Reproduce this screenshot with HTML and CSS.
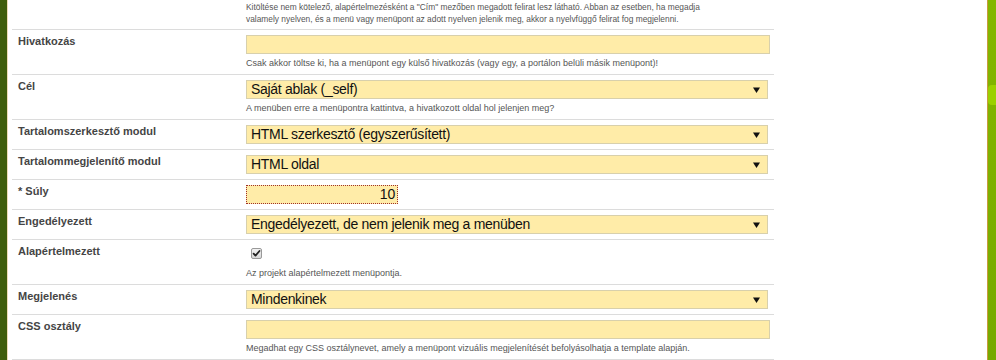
FILE: index.html
```html
<!DOCTYPE html>
<html lang="hu">
<head>
<meta charset="utf-8">
<title>Menüpont szerkesztése</title>
<link rel="stylesheet" href="styles.css">
</head>
<body>
<div class="page">
  <div class="side-left"></div>
  <main class="content">
    <div class="form">
      <div class="row row-top">
        <div class="label"></div>
        <div class="field">
          <p class="help help-top">Kitöltése nem kötelező, alapértelmezésként a "Cím" mezőben megadott felirat lesz látható. Abban az esetben, ha megadja valamely nyelven, és a menü vagy menüpont az adott nyelven jelenik meg, akkor a nyelvfüggő felirat fog megjelenni.</p>
        </div>
      </div>
      <div class="row">
        <div class="label">Hivatkozás</div>
        <div class="field">
          <div class="input"></div>
          <p class="help">Csak akkor töltse ki, ha a menüpont egy külső hivatkozás (vagy egy, a portálon belüli másik menüpont)!</p>
        </div>
      </div>
      <div class="row">
        <div class="label">Cél</div>
        <div class="field">
          <div class="select"><span class="value">Saját ablak (_self)</span><svg class="arrow" width="7" height="6" viewBox="0 0 7 6"><path d="M0 0.5H7L3.5 6Z"/></svg></div>
          <p class="help">A menüben erre a menüpontra kattintva, a hivatkozott oldal hol jelenjen meg?</p>
        </div>
      </div>
      <div class="row">
        <div class="label">Tartalomszerkesztő modul</div>
        <div class="field">
          <div class="select"><span class="value">HTML szerkesztő (egyszerűsített)</span><svg class="arrow" width="7" height="6" viewBox="0 0 7 6"><path d="M0 0.5H7L3.5 6Z"/></svg></div>
        </div>
      </div>
      <div class="row">
        <div class="label">Tartalommegjelenítő modul</div>
        <div class="field">
          <div class="select"><span class="value">HTML oldal</span><svg class="arrow" width="7" height="6" viewBox="0 0 7 6"><path d="M0 0.5H7L3.5 6Z"/></svg></div>
        </div>
      </div>
      <div class="row">
        <div class="label">* Súly</div>
        <div class="field">
          <div class="input input-weight">10</div>
        </div>
      </div>
      <div class="row">
        <div class="label">Engedélyezett</div>
        <div class="field">
          <div class="select"><span class="value">Engedélyezett, de nem jelenik meg a menüben</span><svg class="arrow" width="7" height="6" viewBox="0 0 7 6"><path d="M0 0.5H7L3.5 6Z"/></svg></div>
        </div>
      </div>
      <div class="row">
        <div class="label">Alapértelmezett</div>
        <div class="field">
          <div class="check-wrap">
            <svg class="checkbox" width="11" height="11" viewBox="0 0 11 11">
              <defs>
                <linearGradient id="cbg" x1="0" y1="0" x2="0" y2="1">
                  <stop offset="0" stop-color="#f4f4f4"/>
                  <stop offset="1" stop-color="#d6d6d6"/>
                </linearGradient>
              </defs>
              <rect x="0.5" y="0.5" width="10" height="10" rx="1.5" fill="url(#cbg)" stroke="#999"/>
              <path d="M2.6 5.6L4.5 7.6L8.5 3" fill="none" stroke="#222" stroke-width="1.8" stroke-linecap="round" stroke-linejoin="round"/>
            </svg>
          </div>
          <p class="help">Az projekt alapértelmezett menüpontja.</p>
        </div>
      </div>
      <div class="row">
        <div class="label">Megjelenés</div>
        <div class="field">
          <div class="select"><span class="value">Mindenkinek</span><svg class="arrow" width="7" height="6" viewBox="0 0 7 6"><path d="M0 0.5H7L3.5 6Z"/></svg></div>
        </div>
      </div>
      <div class="row">
        <div class="label">CSS osztály</div>
        <div class="field">
          <div class="input"></div>
          <p class="help">Megadhat egy CSS osztálynevet, amely a menüpont vizuális megjelenítését befolyásolhatja a template alapján.</p>
        </div>
      </div>
    </div>
  </main>
  <div class="side-right"><div class="bump"></div></div>
</div>
</body>
</html>
```

FILE: styles.css
```css
* {
  box-sizing: border-box;
}

html, body {
  margin: 0;
  padding: 0;
  height: 100%;
  overflow: hidden;
}

body {
  font-family: "Liberation Sans", Arial, sans-serif;
  background: #ffffff;
  color: #222;
}

.page {
  display: flex;
  height: 360px;
}

.side-left {
  width: 8px;
  flex: none;
  background: #3f5e0c;
  border-right: 1px solid #efdcb6;
}

.content {
  flex: 1;
  background: #ffffff;
  padding-left: 4px;
}

.side-right {
  width: 9px;
  flex: none;
  border-left: 1px solid #c99a3e;
  background: linear-gradient(to bottom, #84b700 0%, #7fb200 40%, #76a900 100%);
}

.bump {
  margin-top: 85px;
  height: 20px;
  background: #9bd000;
  border-radius: 4px 0 0 4px;
}

.form {
  width: 762px;
}

.row {
  display: grid;
  grid-template-columns: 234px 524px;
  padding: 5px 4px 5px 0;
  border-bottom: 1px solid #dcdcdc;
}

.row-top {
  padding-top: 1px;
  padding-bottom: 4px;
}

.label {
  padding-left: 6px;
  font-size: 11px;
  line-height: 13px;
  font-weight: bold;
  color: #454545;
}

.field {
  display: flex;
  flex-direction: column;
  align-items: flex-start;
}

.input {
  width: 524px;
  height: 19px;
  background: #ffeca8;
  border: 1px solid #d8d0ac;
}

.input-weight {
  width: 152px;
  border: 1px dotted #a0302a;
  font-size: 14px;
  letter-spacing: -0.2px;
  line-height: 17px;
  text-align: right;
  padding-right: 2px;
  color: #111;
}

.select {
  width: 522px;
  height: 19px;
  display: flex;
  align-items: center;
  justify-content: space-between;
  padding: 0 7px 0 4px;
  background: #ffeca8;
  border: 1px solid #d8d0ac;
  font-size: 14px;
  letter-spacing: -0.3px;
  color: #111;
  white-space: nowrap;
}

.value {
  line-height: 17px;
}

.arrow {
  display: block;
  fill: #111;
  flex: none;
}

.check-wrap {
  height: 19px;
  padding: 3px 0 0 5px;
}

.checkbox {
  display: block;
}

.help {
  margin: 3px 0 0;
  font-size: 9px;
  line-height: 12px;
  color: #555;
}

.help-top {
  margin-top: 0;
  font-size: 8.4px;
  max-width: 465px;
}
```
